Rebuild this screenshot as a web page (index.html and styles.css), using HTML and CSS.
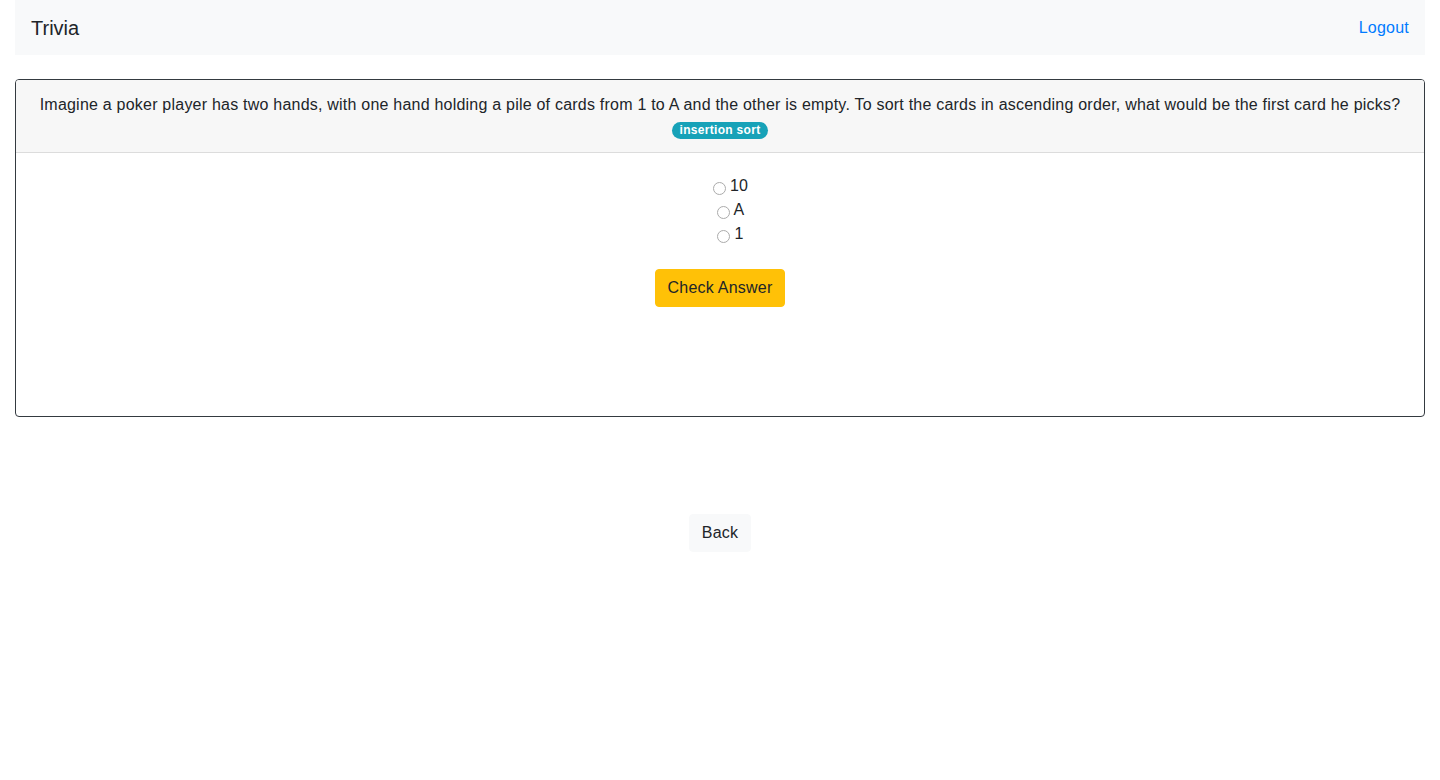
FILE: index.html
```html
<!DOCTYPE html>
<html lang="en">
<head>
<meta charset="utf-8">
<title>Trivia</title>
<link rel="stylesheet" href="styles.css">
</head>
<body>
<div class="container">
  <nav class="navbar">
    <span class="brand">Trivia</span>
    <a class="nav-link" href="#">Logout</a>
  </nav>
  <div class="card">
    <div class="card-header">
      <div>Imagine a poker player has two hands, with one hand holding a pile of cards from 1 to A and the other is empty. To sort the cards in ascending order, what would be the first card he picks?</div>
      <div class="badge-row"><span class="badge">insertion sort</span></div>
    </div>
    <div class="card-body">
      <div class="options">
        <label class="option"><input type="radio" name="answer" value="10">10</label>
        <label class="option"><input type="radio" name="answer" value="A">A</label>
        <label class="option"><input type="radio" name="answer" value="1">1</label>
      </div>
      <button class="btn btn-warning" type="button">Check Answer</button>
    </div>
  </div>
  <div class="back-row">
    <button class="btn btn-light" type="button">Back</button>
  </div>
</div>
</body>
</html>
```
FILE: styles.css
```css
* { box-sizing: border-box; }
html, body {
  margin: 0;
  padding: 0;
  background: #fff;
}
body {
  font-family: "Liberation Sans", Arial, sans-serif;
  font-size: 16px;
  line-height: 1.5;
  letter-spacing: 0.22px;
  color: #212529;
}
.container {
  padding: 0 15px;
}
.navbar {
  display: flex;
  align-items: center;
  justify-content: space-between;
  background: #f8f9fa;
  padding: 8px 16px;
  height: 55px;
}
.brand {
  font-size: 20px;
  line-height: 30px;
  padding: 5px 0;
  color: #212529;
  letter-spacing: 0;
}
.nav-link {
  color: #007bff;
  text-decoration: none;
  padding: 8px 0;
}
.card {
  margin-top: 24px;
  border: 1px solid #343a40;
  border-radius: 4px;
  overflow: hidden;
}
.card-header {
  background: #f7f7f7;
  border-bottom: 1px solid #dcdcdc;
  padding: 13px 20px 11px;
  text-align: center;
}
.badge-row {
  line-height: 24px;
}
.badge {
  display: inline-block;
  background: #17a2b8;
  color: #fff;
  font-size: 12px;
  font-weight: 700;
  line-height: 1;
  letter-spacing: 0.3px;
  padding: 2px 8px 3px;
  border-radius: 10px;
  vertical-align: 0;
}
.card-body {
  padding: 21px 20px 109px;
  display: flex;
  flex-direction: column;
  align-items: center;
}
.options {
  display: flex;
  flex-direction: column;
  align-items: center;
  margin-bottom: 23px;
}
.option {
  display: flex;
  align-items: flex-start;
  line-height: 24px;
  padding-left: 21px;
}
.option input {
  appearance: none;
  -webkit-appearance: none;
  flex: none;
  width: 13px;
  height: 13px;
  margin: 8px 4px 0 0;
  border: 1px solid #ababab;
  border-radius: 50%;
  background: #fff;
}
.btn {
  font-family: inherit;
  font-size: 16px;
  line-height: 24px;
  letter-spacing: 0.22px;
  padding: 6px 12px;
  border: 1px solid transparent;
  border-radius: 4px;
  color: #212529;
  cursor: pointer;
}
.btn-warning {
  background: #ffc107;
  border-color: #ffc107;
}
.btn-light {
  background: #f8f9fa;
  border-color: #f8f9fa;
}
.back-row {
  display: flex;
  justify-content: center;
  margin-top: 97px;
}
```
